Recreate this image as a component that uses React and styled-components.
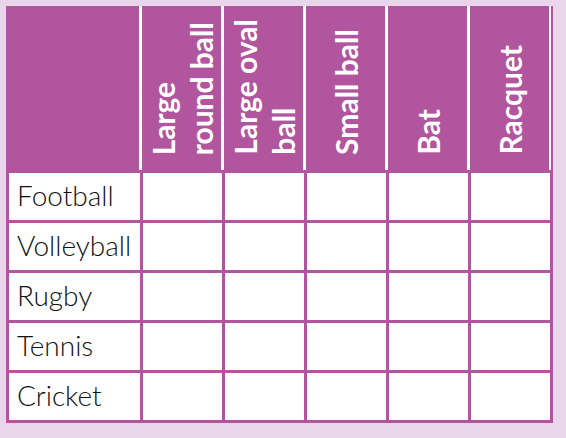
import styled, { createGlobalStyle } from "styled-components";

const purple = "#b1559f";

const GlobalStyle = createGlobalStyle`
  html, body {
    margin: 0;
    padding: 0;
    background: #ead6ea;
  }
  body {
    width: 566px;
    height: 438px;
    overflow: hidden;
  }
`;

const Page = styled.div`
  padding: 6px 0 0 6px;
`;

const Table = styled.div`
  display: flex;
  flex-direction: column;
  row-gap: 3px;
  width: 547px;
  padding: 0 3px 3px 3px;
  box-sizing: border-box;
  background: ${purple};
`;

const columns = "131px repeat(5, 79px)";

const HeaderRow = styled.div`
  display: grid;
  grid-template-columns: ${columns};
  column-gap: 3px;
  margin: 0 -1px;
  background: #fff;
  height: 164px;
`;

const HeaderCell = styled.div`
  display: flex;
  align-items: flex-end;
  justify-content: center;
  padding-bottom: 15px;
  box-sizing: border-box;
  background: ${purple};
`;

const HeaderText = styled.span`
  writing-mode: vertical-rl;
  transform: rotate(180deg);
  text-align: start;
  font-family: Lato, "Open Sans", sans-serif;
  font-weight: 700;
  font-size: 30px;
  line-height: 38px;
  color: #fff;
  white-space: nowrap;
`;

const Row = styled.div`
  display: grid;
  grid-template-columns: ${columns};
  column-gap: 3px;
  height: 47px;
`;

const Cell = styled.div`
  display: flex;
  align-items: center;
  padding: 0 0 3px 8px;
  box-sizing: border-box;
  background: #fff;
  font-family: Lato, "Open Sans", sans-serif;
  font-weight: 300;
  font-size: 28px;
  color: #111;
  white-space: nowrap;
`;

const equipment = [
  ["Large", "round ball"],
  ["Large oval", "ball"],
  ["Small ball"],
  ["Bat"],
  ["Racquet"],
];

const sports = ["Football", "Volleyball", "Rugby", "Tennis", "Cricket"];

export default function App() {
  return (
    <>
      <GlobalStyle />
      <Page>
        <Table>
          <HeaderRow>
            <HeaderCell />
            {equipment.map((lines) => (
              <HeaderCell key={lines.join(" ")}>
                <HeaderText>
                  {lines.map((l, i) => (
                    <span key={l}>
                      {i > 0 && <br />}
                      {l}
                    </span>
                  ))}
                </HeaderText>
              </HeaderCell>
            ))}
          </HeaderRow>
          {sports.map((sport) => (
            <Row key={sport}>
              <Cell>{sport}</Cell>
              {equipment.map((e) => (
                <Cell key={e.join(" ")} />
              ))}
            </Row>
          ))}
        </Table>
      </Page>
    </>
  );
}
